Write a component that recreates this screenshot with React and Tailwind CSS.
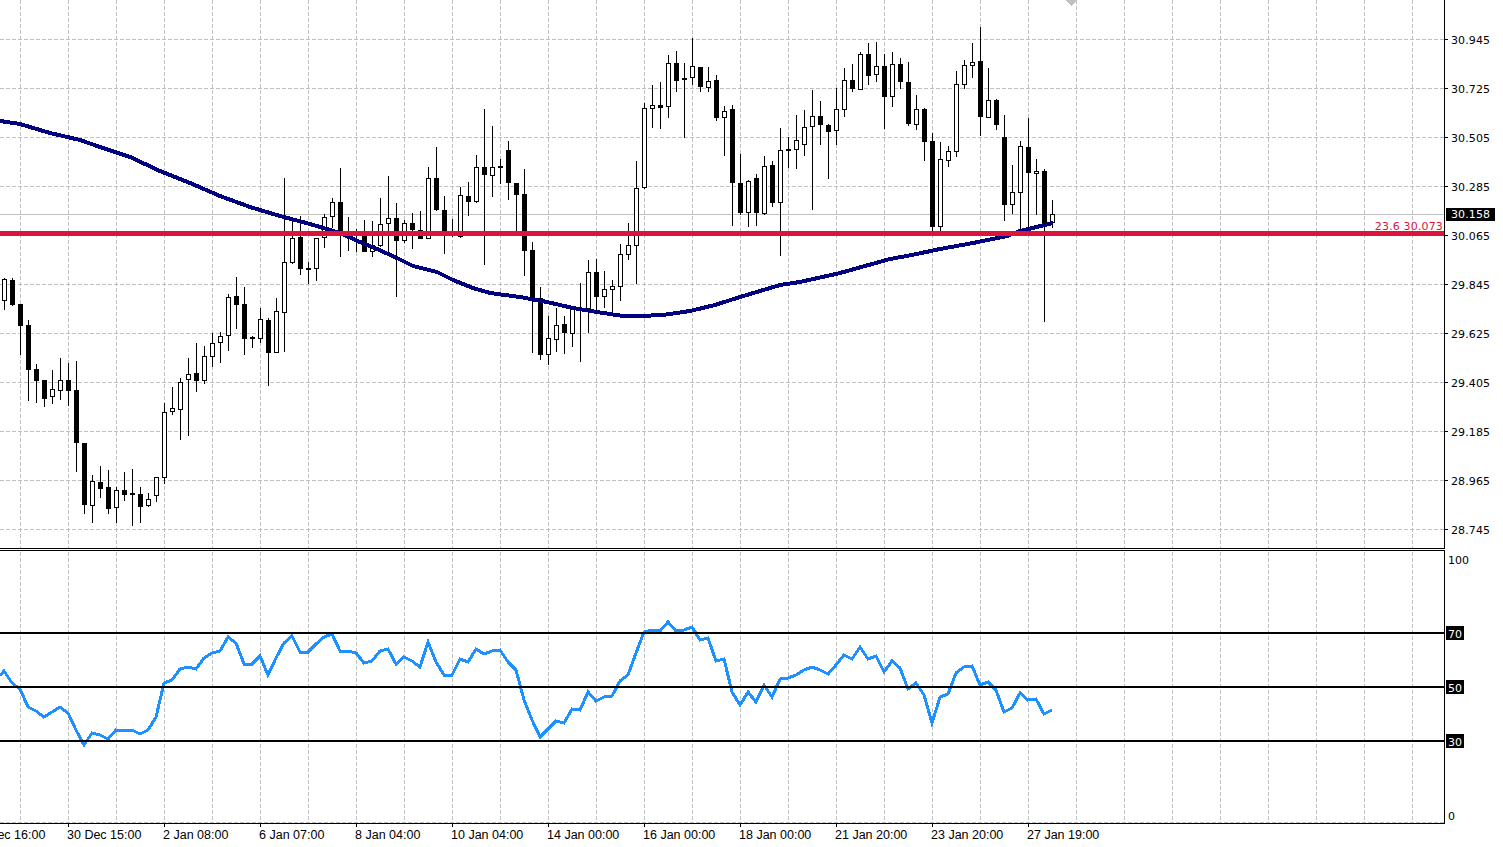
const candles = [
[278,279,301,310,1],[278,280,305,306,0],[304,304,326,355,0],[320,325,370,401,0],[364,369,381,403,0],[380,380,399,407,0],[370,389,397,404,1],[358,380,391,400,1],[363,380,391,406,0],[361,390,443,472,0],
[443,443,505,514,0],[475,481,506,523,1],[466,482,489,498,0],[470,487,509,514,0],[487,490,508,523,1],[472,490,495,501,0],[469,493,495,526,0],[487,494,507,523,0],[493,499,506,507,1],[477,477,496,502,1],
[403,412,478,484,1],[387,408,412,415,1],[378,382,410,440,1],[358,374,380,436,1],[343,373,381,392,0],[346,356,381,384,1],[333,343,357,367,1],[332,336,343,363,1],[294,297,336,351,1],[277,296,305,329,0],
[287,304,339,355,0],[336,337,339,348,0],[308,319,339,343,1],[318,320,353,386,0],[298,311,353,353,1],[178,262,313,352,1],[217,238,263,264,1],[216,237,269,275,0],[262,268,270,284,0],[238,238,269,281,1],
[214,217,238,248,1],[198,202,217,228,1],[168,202,234,257,0],[217,233,235,251,0],[229,233,235,252,0],[220,236,252,252,0],[221,245,252,257,1],[198,224,246,247,1],[176,218,224,254,1],[203,218,241,297,0],
[220,223,241,243,1],[213,223,230,249,0],[211,230,239,239,0],[167,178,239,239,1],[147,178,210,211,0],[196,210,234,254,0],[219,233,235,237,0],[187,195,237,238,1],[182,196,202,216,0],[155,167,202,203,1],
[109,167,175,265,0],[126,167,176,197,1],[159,166,168,184,0],[141,150,183,200,0],[183,183,195,232,0],[169,194,251,276,0],[242,250,299,353,0],[287,298,355,360,0],[316,338,355,365,1],[308,325,340,352,1],
[316,324,333,354,0],[306,307,334,347,1],[283,309,311,362,0],[260,272,309,333,1],[259,272,297,313,0],[271,289,297,308,1],[280,286,290,313,1],[244,254,287,301,1],[223,245,255,260,1],[161,188,246,284,1],
[103,108,188,189,1],[85,105,109,128,1],[82,105,108,129,0],[55,63,107,118,1],[51,63,81,92,0],[63,78,80,138,0],[38,66,78,85,1],[67,67,87,92,0],[67,81,88,92,1],[75,80,118,121,0],
[106,111,118,156,1],[105,109,183,226,0],[154,183,213,215,0],[180,181,213,227,1],[174,178,213,226,0],[156,166,214,215,1],[161,165,203,207,0],[128,150,203,256,1],[137,149,151,168,0],[115,140,150,169,1],
[110,127,145,156,1],[90,116,127,210,1],[101,116,125,145,0],[124,125,132,179,0],[88,109,131,145,1],[68,80,110,117,1],[64,80,89,92,0],[52,54,90,90,1],[43,54,76,85,0],[42,66,75,82,1],
[54,66,97,129,0],[52,64,97,107,1],[58,64,82,89,0],[62,82,124,126,0],[95,109,125,130,1],[108,109,142,161,0],[133,141,227,232,0],[142,159,227,231,1],[146,151,161,167,1],[71,84,152,157,1],
[60,65,85,89,1],[43,62,66,78,1],[27,61,117,136,0],[68,100,118,118,1],[99,100,125,130,0],[115,137,205,221,0],[165,192,205,214,1],[141,146,193,231,1],[118,147,173,231,0],[159,171,174,215,1],
[169,171,227,322,0],[200,214,223,228,1],
];

const rsi = [671,683,689,707,711,717,712,707,713,730,745,733,735,739,730,731,730,734,730,717,683,680,669,667,669,658,653,651,637,643,664,664,656,675,658,643,636,652,652,644,637,634,651,651,
653,663,661,651,649,664,657,661,667,642,662,675,675,659,662,649,654,651,650,662,670,700,720,737,729,721,723,709,710,692,701,697,696,681,675,653,632,630,631,622,631,630,627,
640,638,661,659,692,705,692,702,685,697,679,678,675,670,667,670,674,665,655,659,647,659,656,672,661,668,689,683,695,723,697,694,673,667,666,685,682,690,712,708,693,700,699,714,710];

const ma = "0,121 20,124 50,133 80,140 100,147 130,157 160,171 190,183 220,196 250,207 280,216 310,224 340,233 360,242 377,249 397,258 413,266 437,272 453,280 473,288 490,293 520,297 547,302 573,308 597,312 623,316 640,316 663,315 690,311 715,305 740,297 780,285 800,282 840,273 890,259 912,255 940,249 973,243 1007,236 1020,231 1053,223";

const gridX = Array.from({ length: 30 }, (_, i) => 20 + 48 * i);
const gridY = Array.from({ length: 11 }, (_, i) => 39 + 49 * i);
const prices = ["30.945","30.725","30.505","30.285","30.065","29.845","29.625","29.405","29.185","28.965","28.745"];
const times = ["27 Dec 16:00","30 Dec 15:00","2 Jan 08:00","6 Jan 07:00","8 Jan 04:00","10 Jan 04:00","14 Jan 00:00","16 Jan 00:00","18 Jan 00:00","21 Jan 20:00","23 Jan 20:00","27 Jan 19:00"];

const VGrid = ({ h }) => gridX.map((x) => (
  <line key={x} x1={x + 0.5} x2={x + 0.5} y1={0} y2={h} stroke="#c0c0c0" strokeDasharray="4 2" />
));

function Candle({ c, k }) {
  const [h, t, b, l, bull] = c;
  const x = 4 + 8 * k;
  return (
    <g>
      <rect x={x} y={h} width={1} height={l - h} fill="#000" />
      <rect x={x - 2} y={t} width={5} height={b - t} fill="#000" />
      {bull && b - t > 2 ? <rect x={x - 1} y={t + 1} width={3} height={b - t - 2} fill="#fff" /> : null}
    </g>
  );
}

function Level({ v, mt }) {
  return <div className={`h-[14px] w-fit bg-black px-[2px] pt-[2px] text-white flex items-center ${mt}`}>{v}</div>;
}

export default function App() {
  return (
    <div className="relative flex h-[847px] w-[1503px] flex-col overflow-hidden bg-white text-black font-['DejaVu_Sans',sans-serif] text-[11px] leading-none">
      {/* price pane */}
      <div className="flex h-[549px] shrink-0">
        <div className="relative w-[1445px] shrink-0 border-r border-b border-black">
          <svg width="1444" height="548" className="block" shapeRendering="crispEdges">
            <VGrid h={548} />
            {gridY.map((y) => (
              <line key={y} x1={0} x2={1444} y1={y + 0.5} y2={y + 0.5} stroke="#c0c0c0" strokeDasharray="4 2" />
            ))}
            <rect x={0} y={214} width={1444} height={1} fill="#c0c0c0" />
            {candles.map((c, k) => <Candle key={k} c={c} k={k} />)}
            <polyline points={ma} fill="none" stroke="#000080" strokeWidth={4} />
            <rect x={0} y={231} width={1444} height={5} fill="#dc143c" />
            <polygon points="1066,0 1077,0 1071.5,6" fill="#c0c0c0" />
          </svg>
          <div className="absolute right-[1px] top-[221px] flex h-[11px] items-center whitespace-nowrap tracking-[0.15px] text-[#dc143c]">23.6 30.073</div>
        </div>
        <div className="relative flex-1 pt-[15px]">
          {prices.map((p) => (
            <div key={p} className="flex h-[49px] items-center">
              <div className="h-px w-[3px] bg-black" />
              <span className="ml-[3px] pt-px tracking-[0.1px]">{p}</span>
            </div>
          ))}
          <div className="absolute left-px top-[208px] flex h-[13px] w-[49px] items-center bg-black pl-[5px] tracking-[0.1px] text-white">30.158</div>
        </div>
      </div>
      <div className="h-px shrink-0" />
      {/* RSI pane */}
      <div className="flex h-[274px] shrink-0">
        <div className="w-[1445px] shrink-0 border-y border-r border-black">
          <svg width="1444" height="272" viewBox="0 551 1444 272" className="block" shapeRendering="crispEdges">
            <VGrid h={823} />
            <line x1={0} x2={1444} y1={822.5} y2={822.5} stroke="#c0c0c0" strokeDasharray="4 2" />
            <polyline points={"0,676 " + rsi.map((y, k) => `${4 + 8 * k},${y}`).join(" ")} fill="none" stroke="#1e90ff" strokeWidth={3} />
            <rect x={0} y={632} width={1444} height={2} fill="#000" />
            <rect x={0} y={686} width={1444} height={2} fill="#000" />
            <rect x={0} y={740} width={1444} height={2} fill="#000" />
          </svg>
        </div>
        <div className="flex-1 pl-px pt-[2px]">
          <div className="flex h-[14px] items-center pl-[2px] pt-[2px]">100</div>
          <Level v="70" mt="mt-[60px]" />
          <Level v="50" mt="mt-10" />
          <Level v="30" mt="mt-10" />
          <div className="mt-[60px] flex h-[14px] items-center pl-[2px] pt-[2px]">0</div>
        </div>
      </div>
      {/* time axis */}
      <div className="ml-[-29px] flex flex-1 font-['Liberation_Sans',sans-serif]">
        {times.map((t) => (
          <div key={t} className="flex w-[96px] shrink-0 flex-col">
            <div className="ml-px h-[3px] w-px bg-black" />
            <span className="mt-[2px] whitespace-nowrap text-[12.5px] leading-[13px]">{t}</span>
          </div>
        ))}
      </div>
    </div>
  );
}
